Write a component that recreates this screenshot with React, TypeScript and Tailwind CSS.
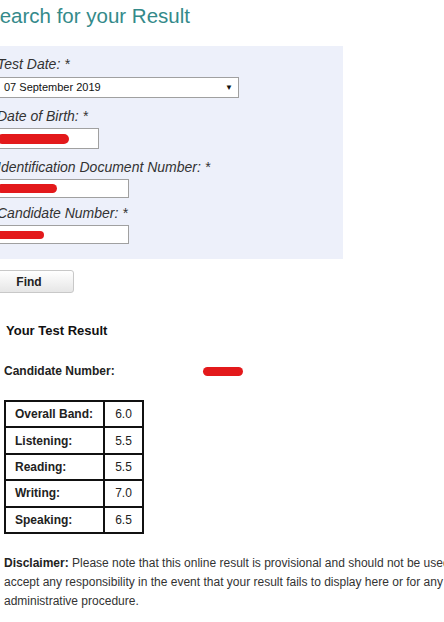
const scores = [
  { label: "Overall Band:", value: "6.0" },
  { label: "Listening:", value: "5.5" },
  { label: "Reading:", value: "5.5" },
  { label: "Writing:", value: "7.0" },
  { label: "Speaking:", value: "6.5" },
];

// red marker stroke used to hide personal details
const Redacted = ({ className }: { className: string }) => (
  <div className={`rounded-full bg-[#e3191b] ${className}`} />
);

const Label = ({ text, className = "" }: { text: string; className?: string }) => (
  <div className={`pl-[1px] text-[14px] leading-[16px] italic text-[#333] ${className}`}>
    {text}
  </div>
);

const App = () => {
  return (
    <div className="w-[444px] h-[622px] overflow-hidden bg-white font-['Liberation_Sans',Arial,sans-serif]">
      <div className="-ml-[16px] w-[700px]">
        <h1 className="pl-[2px] pt-[4px] text-[20.5px] leading-[24px] font-normal text-[#348a8a]">
          Search for your Result
        </h1>

        <div className="mt-[18px] w-[359px] bg-[#edf0fa] pl-[12px] pt-[10px] pb-[15px]">
          <Label text="Test Date: *" />
          <div className="mt-[5px] flex h-[21px] w-[243px] items-center justify-between border border-[#a0a0a0] bg-white pl-[7px] pr-[5px]">
            <span className="text-[11px] text-[#111]">07 September 2019</span>
            <span className="text-[8px] text-[#111]">▼</span>
          </div>

          <Label text="Date of Birth: *" className="mt-[10px]" />
          <div className="mt-[4px] flex h-[21px] w-[103px] items-center border border-[#a0a0a0] bg-white">
            <Redacted className="h-[10px] w-[72px]" />
          </div>

          <Label text="Identification Document Number: *" className="mt-[10px]" />
          <div className="mt-[4px] flex h-[19px] w-[133px] items-center border border-[#a0a0a0] bg-white">
            <Redacted className="h-[9px] w-[60px]" />
          </div>

          <Label text="Candidate Number: *" className="mt-[7px]" />
          <div className="mt-[4px] flex h-[19px] w-[133px] items-center border border-[#a0a0a0] bg-white">
            <Redacted className="h-[8px] w-[47px]" />
          </div>
        </div>

        <button className="mt-[11px] h-[23px] w-[90px] rounded-[3px] border border-[#c8c8c8] bg-gradient-to-b from-white to-[#e6e6e6] text-[12px] font-bold text-[#222]">
          Find
        </button>

        <div className="pl-[20px]">
          <h2 className="mt-[30px] ml-[2px] text-[13px] leading-[15px] font-bold text-[#111]">
            Your Test Result
          </h2>

          <div className="mt-[26px] flex items-center text-[12px] leading-[14px]">
            <span className="w-[199px] font-bold text-[#222]">Candidate Number:</span>
            <Redacted className="h-[9px] w-[40px]" />
          </div>

          <div className="mt-[22px] grid w-[140px] grid-cols-[99px_39px] border-l-2 border-t-2 border-[#111] text-[12px] text-[#222]">
            {scores.map((s) => (
              <div key={s.label} className="contents">
                <div className="flex h-[26.4px] items-center border-b-2 border-r-2 border-[#111] pl-[9px] font-bold">
                  {s.label}
                </div>
                <div className="flex h-[26.4px] items-center justify-center border-b-2 border-r-2 border-[#111]">
                  {s.value}
                </div>
              </div>
            ))}
          </div>

          <p className="mt-[20px] whitespace-nowrap text-[12px] leading-[19px] text-[#333]">
            <b className="text-[#222]">Disclaimer:</b> Please note that this online result is provisional and should not be used as an official confirmation of your performance. We do not
            <br />
            accept any responsibility in the event that your result fails to display here or for any errors in the information shown. This result should not be used for any
            <br />
            administrative procedure.
          </p>
        </div>
      </div>
    </div>
  );
};

export default App;
